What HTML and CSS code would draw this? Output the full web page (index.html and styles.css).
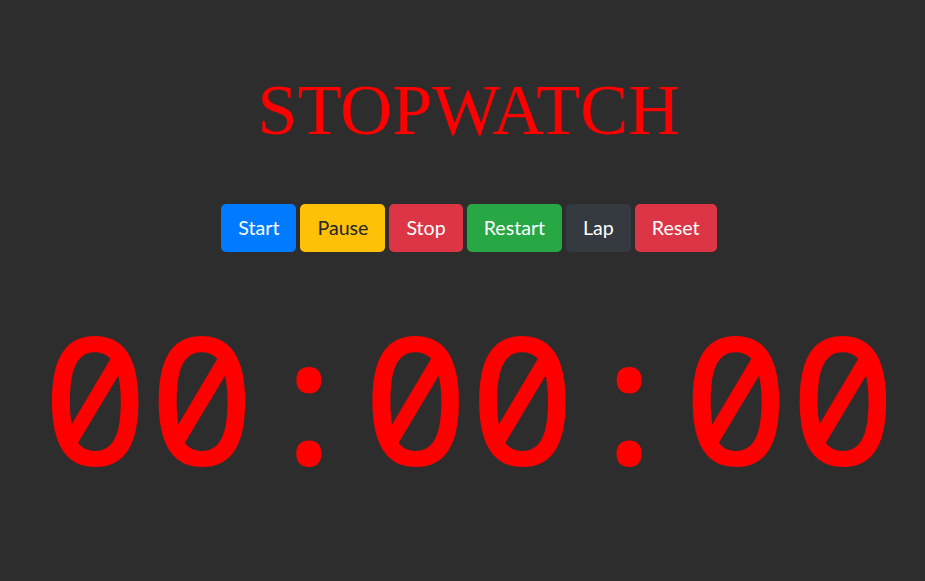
FILE: index.html
```html
<!DOCTYPE html>
<html lang="en">
<head>
<meta charset="utf-8">
<title>Stopwatch</title>
<link rel="stylesheet" href="styles.css">
</head>
<body>
<main class="app">
  <h1 class="title">STOPWATCH</h1>
  <div class="controls">
    <button class="btn btn-primary">Start</button>
    <button class="btn btn-warning">Pause</button>
    <button class="btn btn-danger">Stop</button>
    <button class="btn btn-success">Restart</button>
    <button class="btn btn-dark">Lap</button>
    <button class="btn btn-danger">Reset</button>
  </div>
  <div class="display">00:00:00</div>
</main>
</body>
</html>
```
FILE: styles.css
```css
html, body {
  margin: 0;
  padding: 0;
  background: #2d2d2d;
  height: 100%;
}
.app {
  display: flex;
  flex-direction: column;
  align-items: center;
  padding-top: 66px;
  padding-left: 13px;
}
.title {
  margin: 0;
  font-family: "Liberation Serif", serif;
  font-weight: normal;
  font-size: 72px;
  line-height: 88px;
  color: #ff0000;
}
.controls {
  display: flex;
  gap: 4px;
  margin-top: 50px;
}
.btn {
  font-family: Lato, "Liberation Sans", sans-serif;
  font-size: 19.6px;
  line-height: 30px;
  padding: 8px 16px;
  border: 1px solid transparent;
  border-radius: 5px;
  color: #fff;
  cursor: pointer;
}
.btn-primary { background: #007bff; }
.btn-warning { background: #ffc107; color: #212529; }
.btn-danger { background: #dc3545; }
.btn-success { background: #28a745; }
.btn-dark { background: #343a40; }
.display {
  margin-top: 44px;
  font-family: "Noto Sans Mono", "DejaVu Sans Mono", monospace;
  font-weight: 500;
  font-size: 178px;
  line-height: 200px;
  color: #ff0000;
}
```
